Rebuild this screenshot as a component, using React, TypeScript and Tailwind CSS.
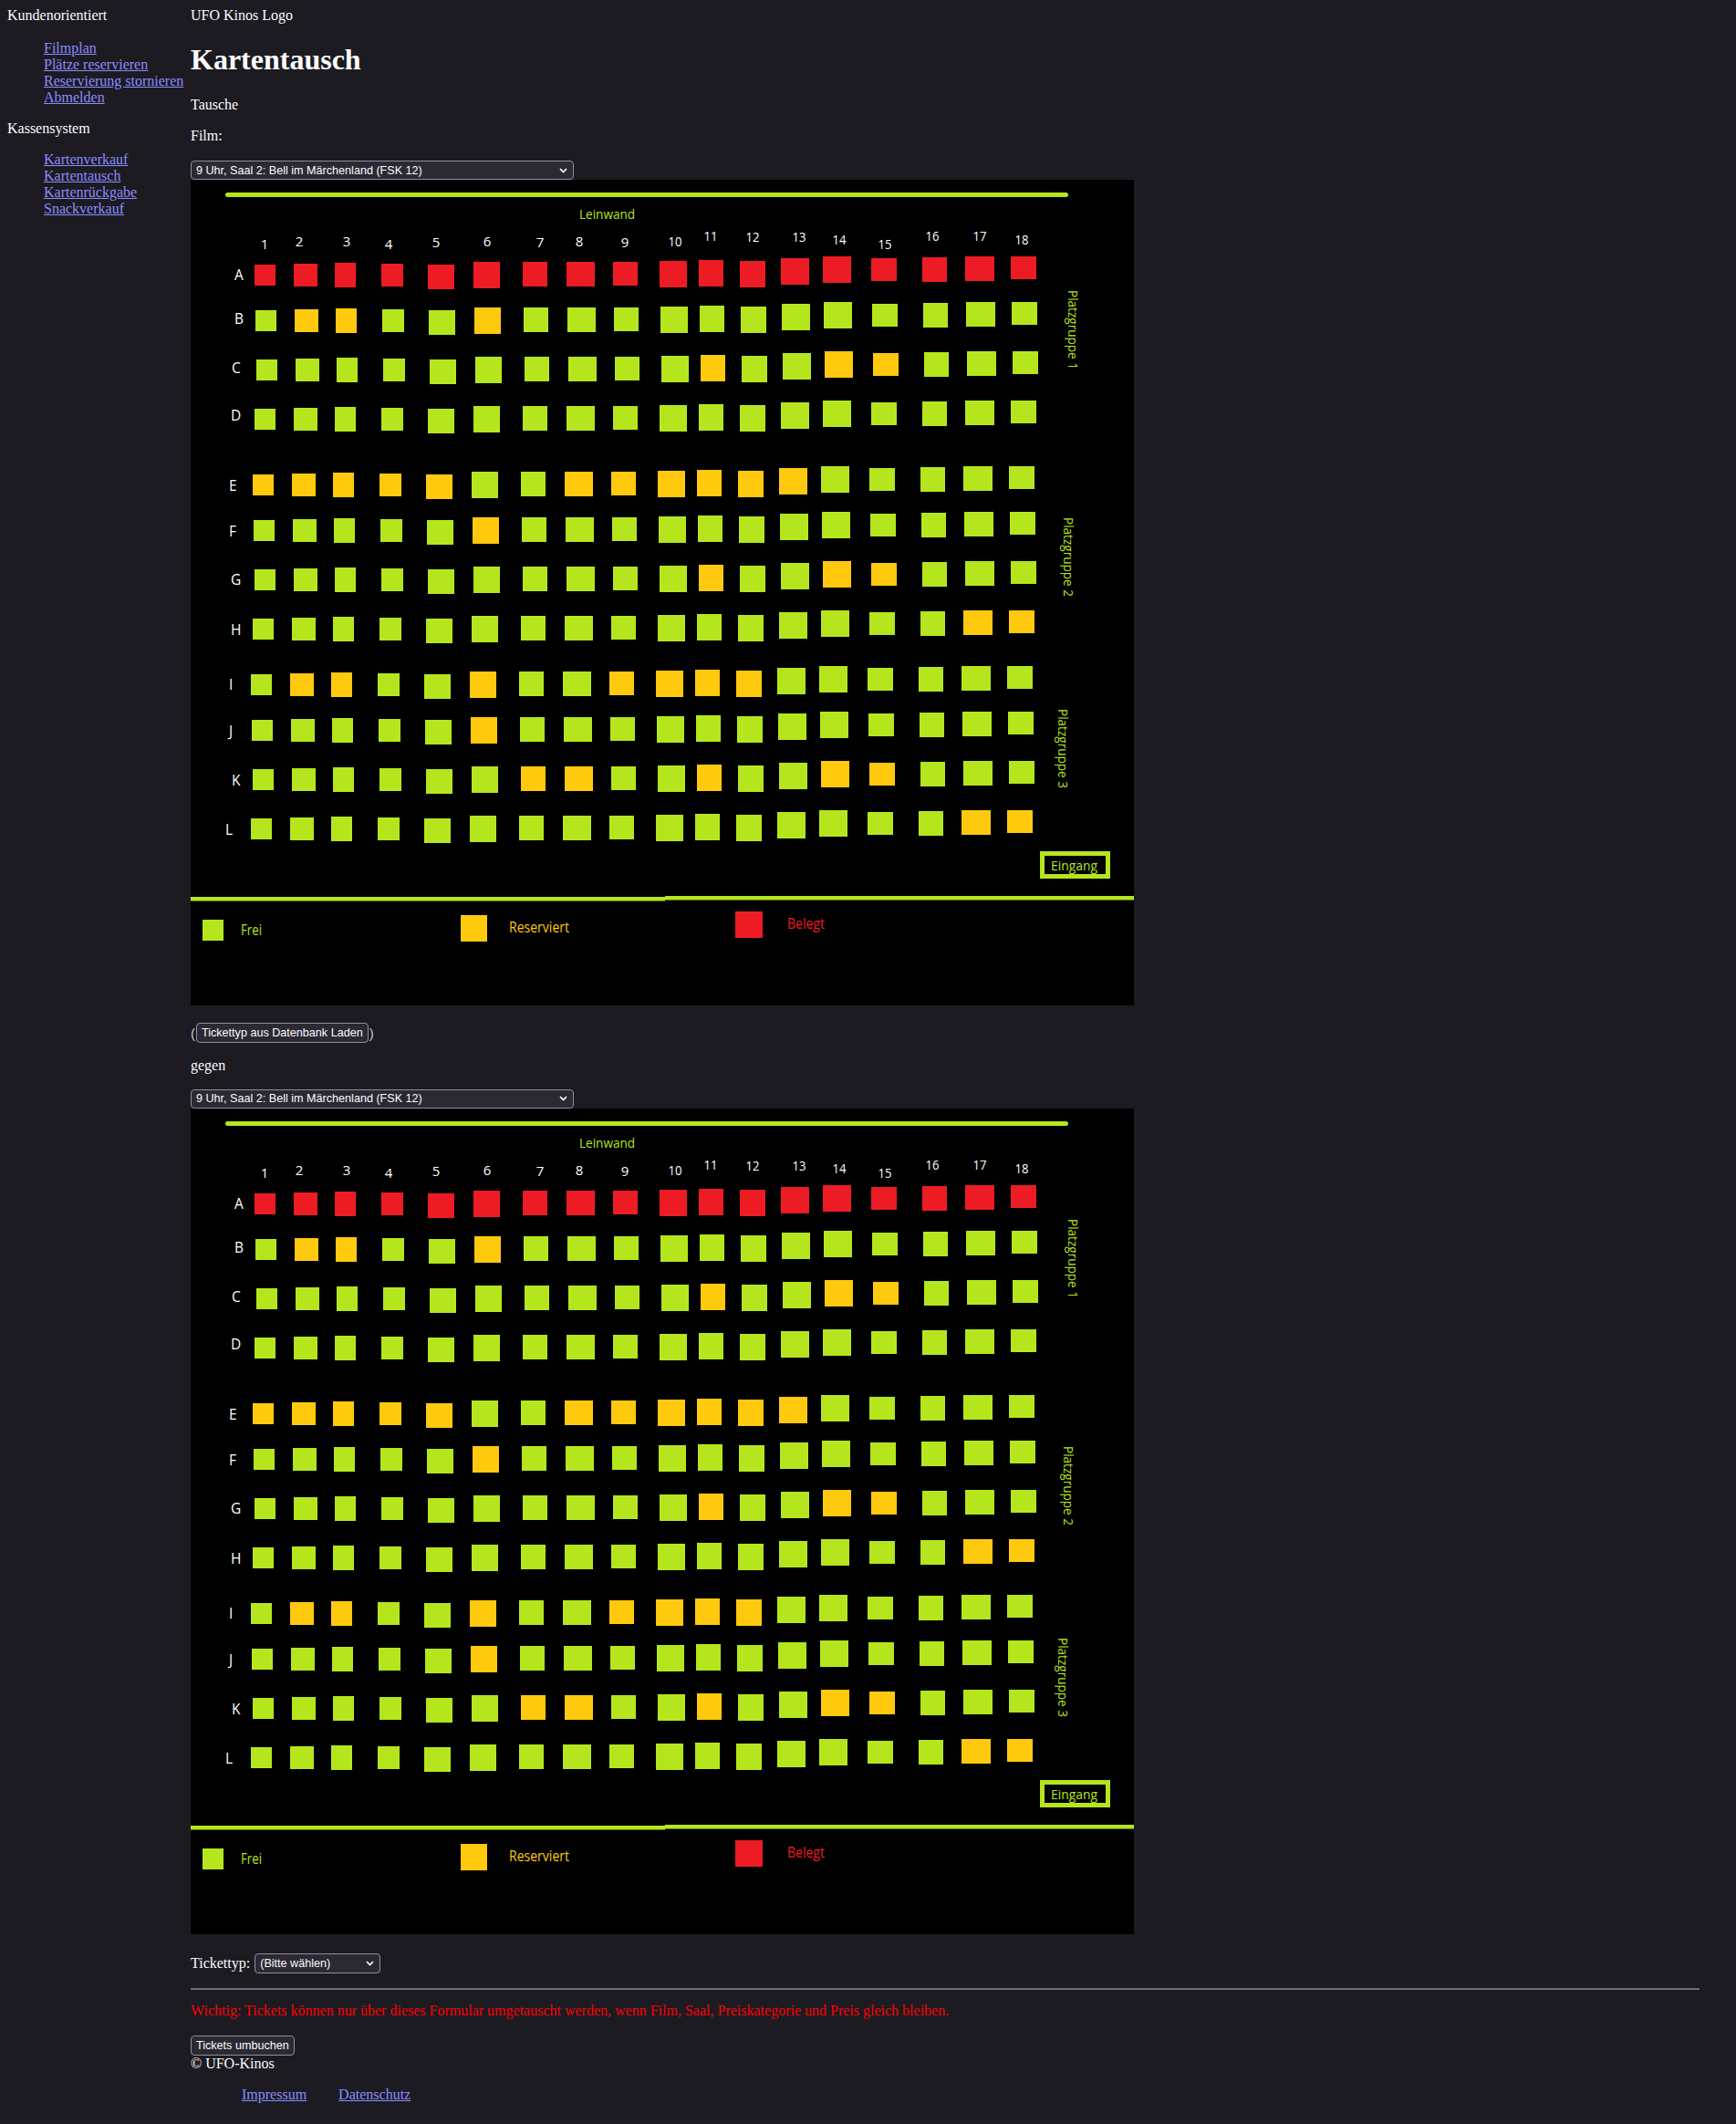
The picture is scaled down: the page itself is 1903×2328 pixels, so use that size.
const GREEN = "#b5e61d";
const YELLOW = "#ffc90e";
const RED = "#ed1c24";

// x, top of row A, width, height for each of the 18 seat columns
const cols: [number, number, number, number][] = [
  [279, 290, 23, 23], [322, 289, 26, 25], [367, 288, 23, 27], [418, 289, 24, 25],
  [469, 290, 29, 27], [519, 287, 29, 29], [573, 287, 27, 27], [621, 287, 31, 27],
  [672, 287, 27, 26], [723, 286, 30, 29], [766, 285, 27, 29], [811, 286, 28, 29],
  [856, 283, 31, 29], [902, 281, 31, 29], [955, 283, 28, 25], [1011, 282, 27, 27],
  [1058, 281, 32, 27], [1108, 281, 28, 25],
];

const colNums: [number, number][] = [
  [290, 262], [328, 259], [380, 259], [426, 262], [478, 260], [534, 259],
  [592, 260], [635, 259], [685, 260], [740, 259], [779, 253], [825, 254],
  [876, 254], [920, 257], [970, 262], [1022, 253], [1074, 253], [1120, 257],
];

const rows = [
  { label: "A", dy: 0, dx: 0, lx: 257, ly: 295, seats: "RRRRRRRRRRRRRRRRRR" },
  { label: "B", dy: 50, dx: 1, lx: 257, ly: 343, seats: "GYYGGYGGGGGGGGGGGG" },
  { label: "C", dy: 104, dx: 2, lx: 254, ly: 397, seats: "GGGGGGGGGGYGGYYGGG" },
  { label: "D", dy: 158, dx: 0, lx: 253, ly: 449, seats: "GGGGGGGGGGGGGGGGGG" },
  { label: "E", dy: 230, dx: -2, lx: 251, ly: 526, seats: "YYYYYGGYYYYYYGGGGG" },
  { label: "F", dy: 280, dx: -1, lx: 251, ly: 576, seats: "GGGGGYGGGGGGGGGGGG" },
  { label: "G", dy: 334, dx: 0, lx: 253, ly: 629, seats: "GGGGGGGGGGYGGYYGGG" },
  { label: "H", dy: 388, dx: -2, lx: 253, ly: 684, seats: "GGGGGGGGGGGGGGGGYY" },
  { label: "I", dy: 449, dx: -4, lx: 251, ly: 744, seats: "GYYGGYGGYYYYGGGGGG" },
  { label: "J", dy: 499, dx: -3, lx: 251, ly: 795, seats: "GGGGGYGGGGGGGGGGGG" },
  { label: "K", dy: 553, dx: -2, lx: 254, ly: 849, seats: "GGGGGGYYGGYGGYYGGG" },
  { label: "L", dy: 607, dx: -4, lx: 247, ly: 903, seats: "GGGGGGGGGGGGGGGGYY" },
];

const groups: [number, number, string][] = [
  [1171, 318, "Platzgruppe 1"],
  [1166, 567, "Platzgruppe 2"],
  [1160, 777, "Platzgruppe 3"],
];

const seatFill = (c: string) => (c === "R" ? RED : c === "Y" ? YELLOW : GREEN);

function SeatMap() {
  return (
    <svg
      width="1034"
      height="905"
      viewBox="209 197 1034 905"
      className="block font-['Open_Sans',sans-serif]"
    >
      <rect x="209" y="197" width="1034" height="905" fill="#000" />
      <line x1="249.5" y1="213.5" x2="1168.5" y2="213.5" stroke={GREEN} strokeWidth="5" strokeLinecap="round" />
      <text x="635" y="240" fill={GREEN} fontSize="15" textLength="61" lengthAdjust="spacingAndGlyphs">
        Leinwand
      </text>
      {colNums.map(([cx, top], i) => (
        <text
          key={i}
          x={cx}
          y={top + 11}
          fill="#fff"
          fontSize="15"
          textAnchor="middle"
          {...(i >= 9 ? { textLength: 15, lengthAdjust: "spacingAndGlyphs" } : {})}
        >
          {i + 1}
        </text>
      ))}
      {rows.map((r) => (
        <g key={r.label}>
          <text x={r.lx} y={r.ly + 11.5} fill="#fff" fontSize="15.5">
            {r.label}
          </text>
          {cols.map(([x, y, w, h], i) => (
            <rect key={i} x={x + r.dx} y={y + r.dy} width={w} height={h} fill={seatFill(r.seats[i])} />
          ))}
        </g>
      ))}
      {groups.map(([x, y, t]) => (
        <text
          key={t}
          transform={`translate(${x} ${y}) rotate(90)`}
          fill={GREEN}
          fontSize="14"
          textLength="87"
          lengthAdjust="spacingAndGlyphs"
        >
          {t}
        </text>
      ))}
      <rect x="1142.5" y="935.5" width="72" height="25" fill="none" stroke={GREEN} strokeWidth="5" />
      <text x="1152" y="953.5" fill={GREEN} fontSize="15" textLength="51" lengthAdjust="spacingAndGlyphs">
        Eingang
      </text>

      {/* legend */}
      <rect x="209" y="983" width="520" height="4.5" fill={GREEN} />
      <rect x="729" y="982" width="514" height="4.5" fill={GREEN} />
      <rect x="222" y="1008" width="23" height="23" fill={GREEN} />
      <text x="264" y="1024.5" fill={GREEN} fontSize="15.5" textLength="23" lengthAdjust="spacingAndGlyphs">
        Frei
      </text>
      <rect x="505" y="1003" width="29" height="29" fill={YELLOW} />
      <text x="558" y="1021.5" fill={YELLOW} fontSize="15.5" textLength="66" lengthAdjust="spacingAndGlyphs">
        Reserviert
      </text>
      <rect x="806" y="999" width="30" height="29" fill={RED} />
      <text x="863" y="1017.5" fill={RED} fontSize="15.5" textLength="41" lengthAdjust="spacingAndGlyphs">
        Belegt
      </text>
    </svg>
  );
}

function FakeSelect({ value, width }: { value: string; width: string }) {
  return (
    <div
      className={`${width} h-[21px] flex items-center justify-between rounded-[4px] border border-[#8f8f9d] bg-[#2b2a33] pl-[5px] pr-[6px] font-['Liberation_Sans',sans-serif] text-[12.6px] leading-none text-[#fbfbfe]`}
    >
      <span>{value}</span>
      <svg width="9" height="6" viewBox="0 0 9 6">
        <polyline points="1,1 4.5,4.5 8,1" fill="none" stroke="#fbfbfe" strokeWidth="1.7" />
      </svg>
    </div>
  );
}

function Button({ children }: { children: React.ReactNode }) {
  return (
    <button className="h-[22px] rounded-[4px] border border-[#8f8f9d] bg-[#2b2a33] px-[5px] font-['Liberation_Sans',sans-serif] text-[12.6px] leading-none text-[#fbfbfe]">
      {children}
    </button>
  );
}

const navLink = "text-[#8c8cff] underline";

export default function App() {
  return (
    <div className="min-h-[2328px] flex bg-[#1c1b22] p-2 font-['Liberation_Serif',serif] text-[16px] leading-[normal] text-[#fbfbfe]">
      <nav className="w-[201px] shrink-0">
        <div>Kundenorientiert</div>
        <ul className="mt-[17.5px] mb-4 pl-10">
          <li><a href="#" className={navLink}>Filmplan</a></li>
          <li><a href="#" className={navLink}>Plätze reservieren</a></li>
          <li><a href="#" className={navLink}>Reservierung stornieren</a></li>
          <li><a href="#" className={navLink}>Abmelden</a></li>
        </ul>
        <div>Kassensystem</div>
        <ul className="my-4 pl-10">
          <li><a href="#" className={navLink}>Kartenverkauf</a></li>
          <li><a href="#" className={navLink}>Kartentausch</a></li>
          <li><a href="#" className={navLink}>Kartenrückgabe</a></li>
          <li><a href="#" className={navLink}>Snackverkauf</a></li>
        </ul>
      </nav>

      <main className="w-[1654px]">
        <div>UFO Kinos Logo</div>
        <h1 className="mt-[21.44px] mb-[22px] text-[32px] font-bold">Kartentausch</h1>
        <p className="mb-4">Tausche</p>
        <p className="mb-[18px]">Film:</p>
        <FakeSelect value="9 Uhr, Saal 2: Bell im Märchenland (FSK 12)" width="w-[420px]" />
        <SeatMap />

        <div className="mt-[19px] flex items-center font-['Liberation_Sans',sans-serif] text-[15px] text-[#c8c8d0]">
          <span className="mr-[1px]">(</span>
          <Button>Tickettyp aus Datenbank Laden</Button>
          <span className="ml-[1px]">)</span>
        </div>

        <p className="mt-4 mb-[16.5px]">gegen</p>
        <FakeSelect value="9 Uhr, Saal 2: Bell im Märchenland (FSK 12)" width="w-[420px]" />
        <SeatMap />

        <div className="mt-[21.5px] flex items-center">
          <span>Tickettyp:</span>
          <div className="ml-[5px] h-[22px]">
            <FakeSelect value="(Bitte wählen)" width="w-[138px] h-[22px]" />
          </div>
        </div>

        <div className="mt-4 h-[2px] bg-[#6c6c74]" />

        <p className="mt-[14px] text-[#ff0000]">
          Wichtig: Tickets können nur über dieses Formular umgetauscht werden, wenn Film, Saal, Preiskategorie und Preis gleich bleiben.
        </p>

        <div className="mt-[18px]">
          <Button>Tickets umbuchen</Button>
        </div>

        <footer>
          <div>© UFO-Kinos</div>
          <ul className="mt-4 flex gap-[35px] pl-14">
            <li><a href="#" className={navLink}>Impressum</a></li>
            <li><a href="#" className={navLink}>Datenschutz</a></li>
          </ul>
        </footer>
      </main>
    </div>
  );
}
